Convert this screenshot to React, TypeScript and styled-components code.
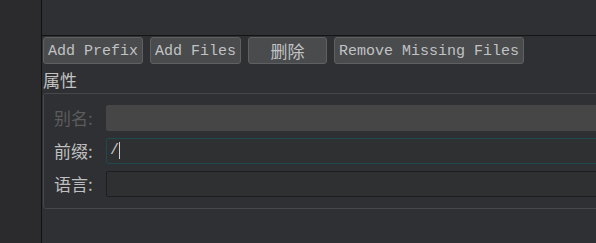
import React from 'react';
import styled, { createGlobalStyle } from 'styled-components';

const GlobalStyle = createGlobalStyle`
  html, body {
    margin: 0;
    padding: 0;
    background: #2f3033;
    overflow: hidden;
  }
`;

const Frame = styled.div`
  display: flex;
  width: 596px;
  height: 243px;
  overflow: hidden;
`;

const Sidebar = styled.div`
  width: 41px;
  flex-shrink: 0;
  background: #2b2b2d;
  border-right: 1px solid #121212;
`;

const Main = styled.div`
  flex: 1;
  min-width: 0;
  display: flex;
  flex-direction: column;
  background: #2f3033;
  overflow: hidden;
`;

const TopArea = styled.div`
  height: 35px;
  border-bottom: 1px solid #151516;
  background: #2f3033;
`;

const Toolbar = styled.div`
  display: flex;
  gap: 7px;
  padding: 1px 0 0 1px;
`;

const ToolButton = styled.button<{ $cjk?: boolean; $width?: number }>`
  height: 27px;
  box-sizing: border-box;
  padding: ${(p) => (p.$cjk ? '0 4px' : '2px 4px 0')};
  ${(p) => (p.$width ? `width: ${p.$width}px;` : '')}
  background: #4a4b4d;
  border: 1px solid #5e6062;
  border-radius: 3px;
  color: #c0c2c4;
  font-family: ${(p) =>
    p.$cjk ? '"Noto Sans CJK SC", sans-serif' : '"Liberation Mono", monospace'};
  font-size: ${(p) => (p.$cjk ? '17px' : '15px')};
  line-height: ${(p) => (p.$cjk ? '25px' : '23px')};
  white-space: nowrap;
`;

const SectionTitle = styled.div`
  font-family: "Noto Sans CJK SC", sans-serif;
  font-size: 17px;
  line-height: 26px;
  color: #c2c2c2;
  padding: 3px 0 0 1px;
  height: 29px;
  box-sizing: border-box;
`;

const GroupBox = styled.div`
  margin-left: 1px;
  margin-right: -30px;
  border: 1px solid #45474a;
  border-radius: 3px;
  padding: 11px 0 11px 10px;
  display: grid;
  grid-template-columns: 52px 1fr;
  row-gap: 6px;
  align-items: center;
  height: 116px;
  box-sizing: border-box;
`;

const FieldLabel = styled.div<{ $disabled?: boolean }>`
  font-family: "Noto Sans CJK SC", sans-serif;
  font-size: 17px;
  line-height: 26px;
  color: ${(p) => (p.$disabled ? '#5c5c5d' : '#c0c0c0')};
  white-space: nowrap;
`;

const Field = styled.div<{ $state?: 'disabled' | 'focused' | 'normal' }>`
  height: 26px;
  box-sizing: border-box;
  border-radius: 2px;
  display: flex;
  align-items: center;
  padding-left: 3px;
  font-family: "Liberation Mono", monospace;
  font-size: 15px;
  color: #c4c4c4;
  background: ${(p) => (p.$state === 'disabled' ? '#464646' : '#2f3032')};
  border: 1px solid
    ${(p) =>
      p.$state === 'disabled' ? '#464646' : p.$state === 'focused' ? '#1c4a4d' : '#1d1e20'};
`;

const Caret = styled.span`
  display: inline-block;
  width: 1px;
  height: 17px;
  background: #d0d0d0;
`;

const App: React.FunctionComponent = () => (
  <>
    <GlobalStyle />
    <Frame>
      <Sidebar />
      <Main>
        <TopArea />
        <Toolbar>
          <ToolButton>Add Prefix</ToolButton>
          <ToolButton>Add Files</ToolButton>
          <ToolButton $cjk $width={79}>删除</ToolButton>
          <ToolButton>Remove Missing Files</ToolButton>
        </Toolbar>
        <SectionTitle>属性</SectionTitle>
        <GroupBox>
          <FieldLabel $disabled>别名:</FieldLabel>
          <Field $state="disabled" />
          <FieldLabel>前缀:</FieldLabel>
          <Field $state="focused">
            /<Caret />
          </Field>
          <FieldLabel>语言:</FieldLabel>
          <Field $state="normal" />
        </GroupBox>
      </Main>
    </Frame>
  </>
);

export default App;
